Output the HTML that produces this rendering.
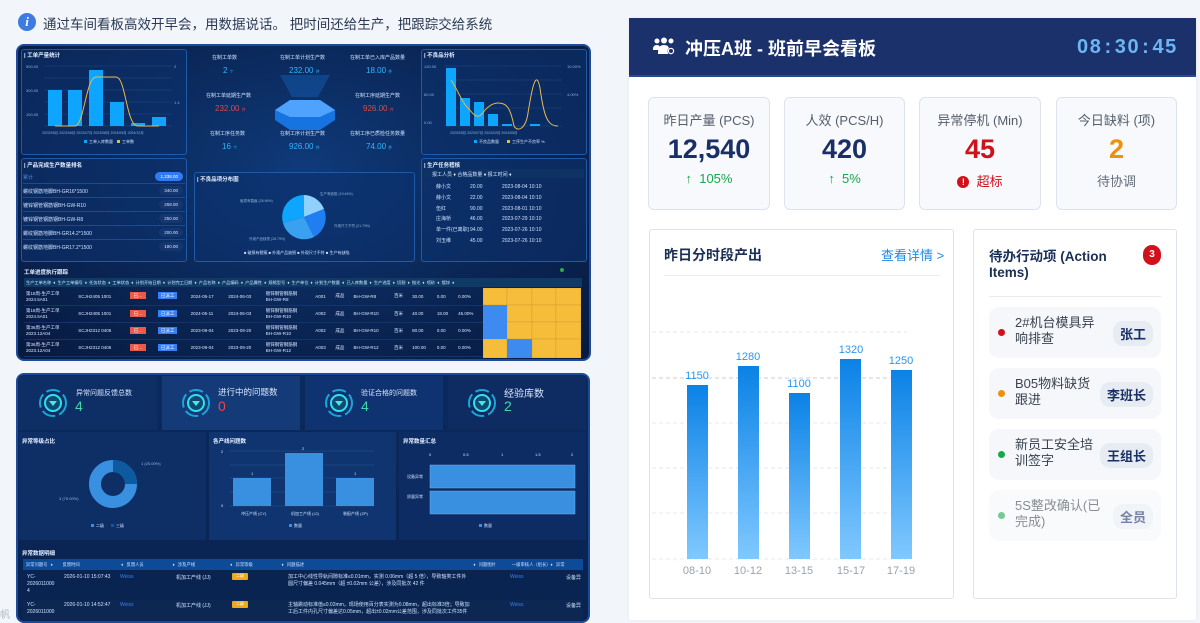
<!DOCTYPE html>
<html><head><meta charset="utf-8">
<style>
*{box-sizing:border-box;margin:0;padding:0}
body{width:1200px;height:620px;overflow:hidden;background:#f2f5f9;font-family:"Liberation Sans","Noto Sans CJK SC",sans-serif;position:relative}
.a{position:absolute}
.dk{background:radial-gradient(ellipse at 50% 40%,#0f3a7a 0%,#0a2656 55%,#071a40 100%);border:2px solid #1d4a9a;border-radius:8px;overflow:hidden}
.sp{background:rgba(12,50,110,.55);border:1px solid #1f5aa8;border-radius:3px}
.t6{font-size:5px;color:#cfe2ff;white-space:nowrap}
.st{font-size:5.5px;color:#e6f0ff;font-weight:bold;white-space:nowrap}
.card{background:#f7f9fc;border:1px solid #dde3ec;border-radius:6px;text-align:center}
.lab{font-size:13px;color:#555e6c;margin-top:12px}
.num{font-size:27px;font-weight:bold;color:#1a2f66;margin-top:5px}
.sub{font-size:13px;margin-top:6px}
.item{background:#f5f7fa;border-radius:10px;left:989px;width:172px;height:51px}
.item .d{position:absolute;left:9px;top:22px;width:7px;height:7px;border-radius:50%}
.item .tx{position:absolute;left:26px;top:8px;width:92px;font-size:13px;color:#3a4250;line-height:16px}
.item .tg{position:absolute;right:8px;top:14px;background:#e7ecf3;border-radius:10px;font-size:13px;font-weight:bold;color:#1a2f66;padding:3px 7px}
.row td{font-size:4.5px;color:#dde8ff;padding:0 2px;height:17px;border-bottom:1px solid #14346b}
</style></head><body>

<div class="a" style="left:18px;top:13px;width:18px;height:18px;border-radius:50%;background:#3d7be0;color:#fff;font:bold italic 13px 'Liberation Serif',serif;text-align:center;line-height:18px">i</div>
<div class="a" style="left:43px;top:13px;font-size:13.5px;color:#2b3a55">通过车间看板高效开早会，用数据说话。 把时间还给生产，把跟踪交给系统</div>

<div class="a dk" style="left:16px;top:44px;width:575px;height:317px"></div>
<div class="a sp" style="left:21px;top:49px;width:166px;height:106px"></div>
<div class="a st" style="left:24px;top:51px">| 工单产量统计</div>
<svg class="a" style="left:22px;top:58px" width="165" height="95">
 <g stroke="#1e4a85" stroke-width=".5"><line x1="22" y1="8" x2="150" y2="8"/><line x1="22" y1="20" x2="150" y2="20"/><line x1="22" y1="32" x2="150" y2="32"/><line x1="22" y1="44" x2="150" y2="44"/><line x1="22" y1="56" x2="150" y2="56"/><line x1="22" y1="68" x2="150" y2="68"/></g>
 <g fill="#0ea5ff"><rect x="26" y="32" width="14" height="36"/><rect x="46" y="32" width="14" height="36"/><rect x="67" y="12" width="14" height="56"/><rect x="88" y="44" width="14" height="24"/><rect x="109" y="65" width="14" height="3"/><rect x="130" y="59" width="14" height="9"/></g>
 <path d="M33 68 L53 68 C62 68 64 19 74 19 L94 19 C104 19 104 68 116 68 L137 68" stroke="#e8b84a" stroke-width="1" fill="none"/>
 <g fill="#8fb0da" font-size="4"><text x="4" y="10">500.00</text><text x="4" y="34">300.00</text><text x="4" y="58">100.00</text><text x="152" y="10">2</text><text x="152" y="46">1.4</text></g>
 <text x="20" y="76" font-size="3.5" fill="#8fb0da">2023/05月 2023/06月 2023/07月 2023/08月 2024/05月 2024/12月</text>
 <rect x="62" y="82" width="3" height="3" fill="#0ea5ff"/><text x="67" y="85" font-size="4" fill="#cfe2ff">工单入库数量</text><rect x="95" y="82" width="3" height="3" fill="#e8b84a"/><text x="100" y="85" font-size="4" fill="#cfe2ff">工单数</text>
</svg>

<svg class="a" style="left:260px;top:75px" width="90" height="70">
 <polygon points="20,0 70,0 58,22 32,22" fill="#1a6fd0" opacity=".35"/>
 <polygon points="15,35 30,25 60,25 75,35 75,45 60,55 30,55 15,45" fill="#1673e0"/>
 <polygon points="15,35 30,25 60,25 75,35 60,42 30,42" fill="#4fa3ff"/>
</svg>
<div class="a t6" style="left:212px;top:54px">在制工单数</div><div class="a" style="left:223px;top:66px;font-size:8px;color:#2fb6ff">2 <span style="font-size:4px">个</span></div>
<div class="a t6" style="left:280px;top:54px">在制工单计划生产数</div><div class="a" style="left:289px;top:66px;font-size:8px;color:#2fb6ff">232.00 <span style="font-size:4px">件</span></div>
<div class="a t6" style="left:350px;top:54px">在制工单已入库产品数量</div><div class="a" style="left:366px;top:66px;font-size:8px;color:#2fb6ff">18.00 <span style="font-size:4px">件</span></div>
<div class="a t6" style="left:206px;top:92px">在制工单延期生产数</div><div class="a" style="left:215px;top:104px;font-size:8px;color:#e04848">232.00 <span style="font-size:4px">件</span></div>
<div class="a t6" style="left:355px;top:92px">在制工序延期生产数</div><div class="a" style="left:363px;top:104px;font-size:8px;color:#e04848">926.00 <span style="font-size:4px">件</span></div>
<div class="a t6" style="left:210px;top:130px">在制工序任务数</div><div class="a" style="left:222px;top:142px;font-size:8px;color:#2fb6ff">16 <span style="font-size:4px">个</span></div>
<div class="a t6" style="left:280px;top:130px">在制工序计划生产数</div><div class="a" style="left:289px;top:142px;font-size:8px;color:#2fb6ff">926.00 <span style="font-size:4px">件</span></div>
<div class="a t6" style="left:350px;top:130px">在制工序已质检任务数量</div><div class="a" style="left:366px;top:142px;font-size:8px;color:#2fb6ff">74.00 <span style="font-size:4px">件</span></div>

<div class="a sp" style="left:421px;top:49px;width:166px;height:106px"></div>
<div class="a st" style="left:424px;top:51px">| 不良品分析</div>
<svg class="a" style="left:422px;top:58px" width="165" height="95">
 <g stroke="#1e4a85" stroke-width=".5"><line x1="22" y1="8" x2="140" y2="8"/><line x1="22" y1="22" x2="140" y2="22"/><line x1="22" y1="36" x2="140" y2="36"/><line x1="22" y1="50" x2="140" y2="50"/><line x1="22" y1="68" x2="140" y2="68"/></g>
 <g fill="#0ea5ff"><rect x="24" y="10" width="10" height="58"/><rect x="38" y="40" width="10" height="28"/><rect x="52" y="44" width="10" height="24"/><rect x="66" y="56" width="10" height="12"/><rect x="80" y="66" width="10" height="2"/><rect x="108" y="66" width="10" height="2"/></g>
 <path d="M29 22 C35 30 40 45 46 50 C50 54 54 62 60 56 C64 50 70 45 76 45 C84 45 88 48 92 68 C96 75 104 70 106 55 C110 30 114 10 118 30 C122 60 126 68 136 68" stroke="#e8b84a" stroke-width="1" fill="none"/>
 <g fill="#8fb0da" font-size="4"><text x="2" y="10">120.00</text><text x="2" y="38">60.00</text><text x="2" y="66">0.00</text><text x="145" y="10">10.00%</text><text x="145" y="38">4.00%</text></g>
 <text x="28" y="76" font-size="3.5" fill="#8fb0da">2023/05月   2023/07月   2024/02月   2024/05月</text>
 <rect x="52" y="82" width="3" height="3" fill="#0ea5ff"/><text x="57" y="85" font-size="4" fill="#cfe2ff">不良品数量</text><rect x="85" y="82" width="3" height="3" fill="#e8b84a"/><text x="90" y="85" font-size="4" fill="#cfe2ff">工序生产不良率 %</text>
</svg>

<div class="a sp" style="left:21px;top:158px;width:166px;height:104px"></div>
<div class="a st" style="left:24px;top:161px">| 产品完成生产数量排名</div>
<div class="a" style="left:23px;top:170px;width:162px">
 <div style="height:14px;border-bottom:1px solid #1c4a8a;position:relative"><span class="t6" style="position:absolute;left:0;top:4px;color:#5a8fe0">累计</span><span style="position:absolute;right:2px;top:2px;background:#2f7bf0;border-radius:6px;font-size:4.5px;color:#fff;padding:2px 5px">1,338.00</span></div>
 <div style="height:14px;border-bottom:1px solid #1c4a8a;position:relative"><span class="t6" style="position:absolute;left:0;top:4px">螺纹钢筋地脚BH-GR16*1500</span><span style="position:absolute;right:2px;top:2px;background:#15366e;border-radius:6px;font-size:4.5px;color:#cfe2ff;padding:2px 5px">340.00</span></div>
 <div style="height:14px;border-bottom:1px solid #1c4a8a;position:relative"><span class="t6" style="position:absolute;left:0;top:4px">镀锌钢管钢筋钢BH-GW-R10</span><span style="position:absolute;right:2px;top:2px;background:#15366e;border-radius:6px;font-size:4.5px;color:#cfe2ff;padding:2px 5px">268.00</span></div>
 <div style="height:14px;border-bottom:1px solid #1c4a8a;position:relative"><span class="t6" style="position:absolute;left:0;top:4px">镀锌钢管钢筋钢BH-GW-R8</span><span style="position:absolute;right:2px;top:2px;background:#15366e;border-radius:6px;font-size:4.5px;color:#cfe2ff;padding:2px 5px">250.00</span></div>
 <div style="height:14px;border-bottom:1px solid #1c4a8a;position:relative"><span class="t6" style="position:absolute;left:0;top:4px">螺纹钢筋地脚BH-GR14.2*1500</span><span style="position:absolute;right:2px;top:2px;background:#15366e;border-radius:6px;font-size:4.5px;color:#cfe2ff;padding:2px 5px">200.00</span></div>
 <div style="height:14px;position:relative"><span class="t6" style="position:absolute;left:0;top:4px">螺纹钢筋地脚BH-GR17.2*1500</span><span style="position:absolute;right:2px;top:2px;background:#15366e;border-radius:6px;font-size:4.5px;color:#cfe2ff;padding:2px 5px">180.00</span></div>
</div>

<div class="a sp" style="left:194px;top:172px;width:221px;height:90px"></div>
<div class="a st" style="left:197px;top:175px">| 不良品项分布图</div>
<svg class="a" style="left:194px;top:180px" width="221" height="82">
 <g transform="translate(110,37)">
  <path d="M0 0 L0 -22 A22 22 0 0 1 20 -8 Z" fill="#8fd0ff"/>
  <path d="M0 0 L20 -8 A22 22 0 0 1 10 20 Z" fill="#1f7ef0"/>
  <path d="M0 0 L10 20 A22 22 0 0 1 -21 6 Z" fill="#3aa0f0"/>
  <path d="M0 0 L-21 6 A22 22 0 0 1 0 -22 Z" fill="#0ea5ff"/>
 </g>
 <g font-size="3.5" fill="#8fb0da"><text x="126" y="15">生产有缺陷 (19.46%)</text><text x="46" y="22">破损有裂痕 (28.96%)</text><text x="140" y="47">外观尺寸不符 (21.79%)</text><text x="55" y="60">外观产品缺损 (28.79%)</text></g>
 <text x="50" y="74" font-size="4" fill="#cfe2ff">■ 破损有裂痕  ■ 外观产品缺损  ■ 外观尺寸不符  ■ 生产有缺陷</text>
</svg>

<div class="a sp" style="left:421px;top:158px;width:166px;height:104px"></div>
<div class="a st" style="left:424px;top:161px">| 生产任务稽核</div>
<div class="a" style="left:424px;top:169px;width:160px;height:9px;background:#0e3264"></div>
<div class="a t6" style="left:432px;top:171px">报工人员 ♦  合格品数量 ♦     报工时间 ♦</div>
<div class="a t6" style="left:436px;top:182px;line-height:10.8px">薛小文<br>薛小文<br>伍红<br>庄海桥<br>单一件(已离职)<br>刘玉维</div>
<div class="a t6" style="left:470px;top:182px;line-height:10.8px">20.00<br>22.00<br>90.00<br>46.00<br>94.00<br>45.00</div>
<div class="a t6" style="left:502px;top:182px;line-height:10.8px">2023-08-04 10:10<br>2023-08-04 10:10<br>2023-08-01 10:10<br>2023-07-29 10:10<br>2023-07-26 10:10<br>2023-07-26 10:10</div>

<div class="a st" style="left:24px;top:268px">工单进度执行跟踪</div>
<div class="a" style="left:560px;top:268px;width:4px;height:4px;border-radius:50%;background:#2ea84a"></div>
<div class="a" style="left:24px;top:278px;width:558px;height:9px;background:#0f3a66"></div>
<div class="a t6" style="left:26px;top:280px;font-size:4.2px;word-spacing:1px">生产工单名称 ♦ 生产工单编号 ♦ 任务状态 ♦ 工单状态 ♦ 计划开始日期 ♦ 计划完工日期 ♦ 产品名称 ♦ 产品编码 ♦ 产品属性 ♦ 规格型号 ♦ 生产单位 ♦ 计划生产数量 ♦ 已入库数量 ♦ 生产进度 ♦ 切割 ♦ 抛光 ♦ 喷砂 ♦ 镀锌 ♦</div>
<table class="a" style="left:24px;top:288px;width:459px;border-collapse:collapse">
 <tr class="row"><td>第18周-生产工单<br>2024.5A01</td><td>SCJH2405 1001</td><td><span style="background:#e85a4a;padding:1px 4px;color:#fff">已...</span></td><td><span style="background:#3a7ff0;padding:1px 3px;color:#fff">已派工</span></td><td>2024-05-17</td><td>2024-06-03</td><td>镀锌钢管钢筋钢<br>BH-GW-R8</td><td>A001</td><td>成品</td><td>BH-GW-R8</td><td>百米</td><td>30.00</td><td>0.00</td><td>0.00%</td></tr>
 <tr class="row"><td>第18周-生产工单<br>2024.5A01</td><td>SCJH2405 1001</td><td><span style="background:#e85a4a;padding:1px 4px;color:#fff">已...</span></td><td><span style="background:#3a7ff0;padding:1px 3px;color:#fff">已派工</span></td><td>2024-05-11</td><td>2024-06-03</td><td>镀锌钢管钢筋钢<br>BH-GW-R10</td><td>A002</td><td>成品</td><td>BH-GW-R10</td><td>百米</td><td>40.00</td><td>18.00</td><td>45.00%</td></tr>
 <tr class="row"><td>第36周-生产工单<br>2023.12A04</td><td>SCJH2312 0406</td><td><span style="background:#e85a4a;padding:1px 4px;color:#fff">已...</span></td><td><span style="background:#3a7ff0;padding:1px 3px;color:#fff">已派工</span></td><td>2023-09-04</td><td>2023-09-20</td><td>镀锌钢管钢筋钢<br>BH-GW-R10</td><td>A002</td><td>成品</td><td>BH-GW-R10</td><td>百米</td><td>80.00</td><td>0.00</td><td>0.00%</td></tr>
 <tr class="row"><td>第36周-生产工单<br>2023.12A04</td><td>SCJH2312 0406</td><td><span style="background:#e85a4a;padding:1px 4px;color:#fff">已...</span></td><td><span style="background:#3a7ff0;padding:1px 3px;color:#fff">已派工</span></td><td>2023-09-04</td><td>2023-09-20</td><td>镀锌钢管钢筋钢<br>BH-GW-R12</td><td>A003</td><td>成品</td><td>BH-GW-R12</td><td>百米</td><td>100.00</td><td>0.00</td><td>0.00%</td></tr>
</table>
<svg class="a" style="left:483px;top:288px" width="98" height="70">
 <g fill="#f5bd3a" stroke="#c99a2a" stroke-width=".4">
  <rect x="0" y="0" width="24" height="17"/><rect x="24" y="0" width="25" height="17"/><rect x="49" y="0" width="24" height="17"/><rect x="73" y="0" width="25" height="17"/>
  <rect x="24" y="17" width="25" height="17"/><rect x="49" y="17" width="24" height="17"/><rect x="73" y="17" width="25" height="17"/>
  <rect x="24" y="34" width="25" height="17"/><rect x="49" y="34" width="24" height="17"/><rect x="73" y="34" width="25" height="17"/>
  <rect x="0" y="51" width="24" height="19"/><rect x="49" y="51" width="24" height="19"/><rect x="73" y="51" width="25" height="19"/>
 </g>
 <g fill="#3d8af0"><rect x="0" y="17" width="24" height="17"/><rect x="0" y="34" width="24" height="17"/><rect x="24" y="51" width="25" height="19"/></g>
</svg>

<div class="a dk" style="left:16px;top:373px;width:574px;height:250px;background:linear-gradient(180deg,#0b2a5c,#0a2350)"></div>
<div class="a" style="left:19px;top:376px;width:138px;height:54px;background:#0d2f66"></div>
<div class="a" style="left:162px;top:376px;width:138px;height:54px;background:#143a78"></div>
<div class="a" style="left:305px;top:376px;width:138px;height:54px;background:#0f3270"></div>
<div class="a" style="left:448px;top:376px;width:138px;height:54px;background:#0e2c62"></div>
<svg class="a" style="left:38px;top:388px" width="30" height="30"><circle cx="15" cy="15" r="13" fill="none" stroke="#1aa6d8" stroke-width="2" stroke-dasharray="14 4"/><circle cx="15" cy="15" r="8" fill="#0e4a78" stroke="#32e0e6" stroke-width="2"/><path d="M11 13 L19 13 L15 18 Z" fill="#4de8d8"/></svg>
<svg class="a" style="left:181px;top:388px" width="30" height="30"><circle cx="15" cy="15" r="13" fill="none" stroke="#1aa6d8" stroke-width="2" stroke-dasharray="14 4"/><circle cx="15" cy="15" r="8" fill="#0e4a78" stroke="#32e0e6" stroke-width="2"/><path d="M11 13 L19 13 L15 18 Z" fill="#4de8d8"/></svg>
<svg class="a" style="left:324px;top:388px" width="30" height="30"><circle cx="15" cy="15" r="13" fill="none" stroke="#1aa6d8" stroke-width="2" stroke-dasharray="14 4"/><circle cx="15" cy="15" r="8" fill="#0e4a78" stroke="#32e0e6" stroke-width="2"/><path d="M11 13 L19 13 L15 18 Z" fill="#4de8d8"/></svg>
<svg class="a" style="left:467px;top:388px" width="30" height="30"><circle cx="15" cy="15" r="13" fill="none" stroke="#1aa6d8" stroke-width="2" stroke-dasharray="14 4"/><circle cx="15" cy="15" r="8" fill="#0e4a78" stroke="#32e0e6" stroke-width="2"/><path d="M11 13 L19 13 L15 18 Z" fill="#4de8d8"/></svg>
<div class="a" style="left:76px;top:388px;font-size:7px;color:#d8e6ff">异常问题反馈总数</div><div class="a" style="left:75px;top:398px;font-size:14px;color:#3ed8a8">4</div>
<div class="a" style="left:218px;top:386px;font-size:8.5px;color:#d8e6ff">进行中的问题数</div><div class="a" style="left:218px;top:398px;font-size:14px;color:#e84848">0</div>
<div class="a" style="left:361px;top:388px;font-size:7px;color:#d8e6ff">验证合格的问题数</div><div class="a" style="left:361px;top:398px;font-size:14px;color:#3ed8a8">4</div>
<div class="a" style="left:504px;top:385px;font-size:10px;color:#d8e6ff">经验库数</div><div class="a" style="left:504px;top:398px;font-size:14px;color:#3ed8a8">2</div>

<div class="a" style="left:19px;top:432px;width:187px;height:108px;background:#0e2e66"></div>
<div class="a" style="left:209px;top:432px;width:187px;height:108px;background:#0f3470"></div>
<div class="a" style="left:399px;top:432px;width:187px;height:108px;background:#0d2c64"></div>
<div class="a st" style="left:22px;top:437px">异常等级占比</div>
<div class="a st" style="left:213px;top:437px">各产线问题数</div>
<div class="a st" style="left:403px;top:437px">异常数量汇总</div>
<svg class="a" style="left:19px;top:440px" width="187" height="100">
 <circle cx="94" cy="44" r="18" fill="none" stroke="#3a90e0" stroke-width="12"/>
 <path d="M94 20 A24 24 0 0 1 118 44 L106 44 A12 12 0 0 0 94 32 Z" fill="#0d5aa0"/>
 <text x="122" y="25" font-size="4" fill="#9ab8e0">1 (25.00%)</text><text x="40" y="60" font-size="4" fill="#9ab8e0">3 (75.00%)</text>
 <rect x="72" y="84" width="3" height="3" fill="#3a90e0"/><text x="77" y="87" font-size="4" fill="#cfe2ff">二级</text><rect x="92" y="84" width="3" height="3" fill="#0d5aa0"/><text x="97" y="87" font-size="4" fill="#cfe2ff">三级</text>
</svg>
<svg class="a" style="left:209px;top:440px" width="187" height="100">
 <g stroke="#2a5a96" stroke-width=".4"><line x1="20" y1="11" x2="165" y2="11"/><line x1="20" y1="25" x2="165" y2="25"/><line x1="20" y1="38" x2="165" y2="38"/><line x1="20" y1="52" x2="165" y2="52"/><line x1="20" y1="66" x2="165" y2="66"/></g>
 <g fill="#3a90e0"><rect x="24" y="38" width="38" height="28"/><rect x="76" y="13" width="38" height="53"/><rect x="127" y="38" width="38" height="28"/></g>
 <g font-size="4" fill="#cfe2ff"><text x="42" y="35">1</text><text x="93" y="10">2</text><text x="145" y="35">1</text><text x="32" y="75">冲压产线 (CY)</text><text x="82" y="75">机加工产线 (JJ)</text><text x="134" y="75">装配产线 (ZP)</text><text x="12" y="13">2</text><text x="12" y="67">0</text></g>
 <rect x="80" y="84" width="3" height="3" fill="#3a90e0"/><text x="85" y="87" font-size="4" fill="#cfe2ff">数量</text>
</svg>
<svg class="a" style="left:399px;top:440px" width="187" height="100">
 <g font-size="4" fill="#cfe2ff"><text x="30" y="16">0</text><text x="64" y="16">0.5</text><text x="102" y="16">1</text><text x="136" y="16">1.5</text><text x="172" y="16">2</text><text x="8" y="38">设备异常</text><text x="8" y="58">质量异常</text></g>
 <g fill="#3a90e0" stroke="#6ab0f0" stroke-width=".5"><rect x="31" y="25" width="145" height="23"/><rect x="31" y="51" width="145" height="23"/></g>
 <rect x="80" y="84" width="3" height="3" fill="#3a90e0"/><text x="85" y="87" font-size="4" fill="#cfe2ff">数量</text>
</svg>

<div class="a st" style="left:22px;top:549px">异常数据明细</div>
<div class="a" style="left:23px;top:559px;width:560px;height:11px;background:#0d4a98"></div>
<div class="a t6" style="left:26px;top:562px;font-size:4.3px;word-spacing:2px">异常问题号 ♦ &nbsp; 反馈时间 &nbsp; &nbsp; &nbsp; &nbsp; &nbsp; &nbsp; ♦ 反馈人员 &nbsp; &nbsp; &nbsp; &nbsp; ♦ 涉及产线 &nbsp; &nbsp; &nbsp; &nbsp; &nbsp; ♦ 异常等级 &nbsp; &nbsp; &nbsp; &nbsp; ♦ 问题描述 &nbsp; &nbsp; &nbsp; &nbsp; &nbsp; &nbsp; &nbsp; &nbsp; &nbsp; &nbsp; &nbsp; &nbsp; &nbsp; &nbsp; &nbsp; &nbsp; &nbsp; &nbsp; &nbsp; &nbsp; &nbsp; &nbsp; &nbsp; &nbsp; &nbsp; &nbsp; ♦ 问题图片 &nbsp; &nbsp; 一级审核人（组长）♦ 异常</div>
<div class="a" style="left:23px;top:600px;width:560px;height:20px;background:#0c2752"></div>
<div class="a t6" style="left:27px;top:574px;line-height:7px">YC-<br>2026011000<br>4</div>
<div class="a t6" style="left:64px;top:574px">2026-01-10 15:07:43</div>
<div class="a t6" style="left:120px;top:574px;color:#3a7ff0">Weiss</div>
<div class="a t6" style="left:176px;top:574px">机加工产线 (JJ)</div>
<div class="a" style="left:232px;top:573px;width:16px;height:7px;background:#f0a816;border-radius:1px;font-size:4px;color:#fff;text-align:center">二级</div>
<div class="a t6" style="left:288px;top:574px;line-height:7px">加工中心线性导轨间隙标准≤0.01mm，实测 0.06mm（超 5 倍），导致轴类工件外<br>圆尺寸偏差 0.045mm（超 ±0.02mm 公差），涉及同批次 42 件</div>
<div class="a t6" style="left:510px;top:574px;color:#3a7ff0">Weiss</div><div class="a t6" style="left:566px;top:574px">设备异</div>
<div class="a t6" style="left:27px;top:602px;line-height:7px">YC-<br>2026011000</div>
<div class="a t6" style="left:64px;top:602px">2026-01-10 14:52:47</div>
<div class="a t6" style="left:120px;top:602px;color:#3a7ff0">Weiss</div>
<div class="a t6" style="left:176px;top:602px">机加工产线 (JJ)</div>
<div class="a" style="left:232px;top:601px;width:16px;height:7px;background:#f0a816;border-radius:1px;font-size:4px;color:#fff;text-align:center">二级</div>
<div class="a t6" style="left:288px;top:602px;line-height:7px">主轴跳动标准值≤0.02mm，现场使用百分表实测为0.08mm，超出标准3倍；导致加<br>工后工件内孔尺寸偏差达0.05mm，超出±0.02mm公差范围，涉及同批次工件35件</div>
<div class="a t6" style="left:510px;top:602px;color:#3a7ff0">Weiss</div><div class="a t6" style="left:566px;top:602px">设备异</div>
<div class="a" style="left:0px;top:606px;font-size:10px;color:#b0b8c4">帆</div>

<!-- RIGHT BOARD -->
<div class="a" style="left:629px;top:18px;width:567px;height:602px;background:#fff;border-radius:2px;box-shadow:0 0 4px rgba(0,0,0,.05)"></div>
<div class="a" style="left:629px;top:18px;width:567px;height:59px;background:#1a316b;border-bottom:2px solid #2a4a90"></div>
<svg class="a" style="left:653px;top:37px" width="22" height="18" viewBox="0 0 22 18" fill="#fff">
 <circle cx="4" cy="4" r="2.5"/><circle cx="11" cy="3.5" r="3"/><circle cx="18" cy="4" r="2.5"/>
 <path d="M0 12 Q0 8 4 8 Q7 8 7 11 L7 13 L0 13Z"/><path d="M5 16 Q5 8 11 8 Q15 8 16 11 L15 17 L5 17Z"/>
 <circle cx="18" cy="14" r="3.5" fill="#1a316b"/><circle cx="18" cy="14" r="2.6" fill="none" stroke="#fff" stroke-width="1.2"/>
</svg>
<div class="a" style="left:685px;top:35px;font-size:18px;font-weight:bold;color:#fff">冲压A班 - 班前早会看板</div>
<div class="a" style="left:1077px;top:36px;font-size:20px;font-weight:bold;color:#6db6f2;letter-spacing:1.6px;font-family:'Liberation Sans',sans-serif">08<span style="margin:0 2px">:</span>30<span style="margin:0 2px">:</span>45</div>

<div class="a card" style="left:648px;top:97px;width:122px;height:113px"><div class="lab">昨日产量 (PCS)</div><div class="num">12,540</div><div class="sub" style="color:#18a84a">↑&nbsp; 105%</div></div>
<div class="a card" style="left:784px;top:97px;width:121px;height:113px"><div class="lab">人效 (PCS/H)</div><div class="num">420</div><div class="sub" style="color:#18a84a">↑&nbsp; 5%</div></div>
<div class="a card" style="left:919px;top:97px;width:122px;height:113px"><div class="lab">异常停机 (Min)</div><div class="num" style="color:#d0101a">45</div><div class="sub" style="color:#d0101a"><span style="display:inline-block;width:12px;height:12px;border-radius:50%;background:#d0101a;color:#fff;font-size:9px;line-height:12px;font-weight:bold;vertical-align:1px">!</span>&nbsp; 超标</div></div>
<div class="a card" style="left:1056px;top:97px;width:121px;height:113px"><div class="lab">今日缺料 (项)</div><div class="num" style="color:#f0900a">2</div><div class="sub" style="color:#666e7a">待协调</div></div>

<div class="a" style="left:649px;top:229px;width:305px;height:370px;border:1px solid #dde3ec;border-radius:3px;background:#fff"></div>
<div class="a" style="left:664px;top:245px;font-size:14px;font-weight:bold;color:#1a2f55">昨日分时段产出</div>
<div class="a" style="left:881px;top:245px;font-size:13px;color:#1e88e5">查看详情 &gt;</div>
<div class="a" style="left:664px;top:275px;width:276px;height:1px;background:#e8ecf2"></div>
<svg class="a" style="left:649px;top:300px" width="305" height="290">
 <defs><linearGradient id="g" x1="0" y1="0" x2="0" y2="1"><stop offset="0" stop-color="#0a82e6"/><stop offset="1" stop-color="#80c8ff"/></linearGradient></defs>
 <g stroke="#e4e8ee" stroke-dasharray="4 3" stroke-width="1"><line x1="3" y1="32" x2="258" y2="32"/><line x1="3" y1="123" x2="258" y2="123"/><line x1="3" y1="168" x2="258" y2="168"/><line x1="3" y1="213" x2="258" y2="213"/><line x1="3" y1="259" x2="258" y2="259"/></g>
 <line x1="3" y1="78" x2="258" y2="78" stroke="#c8ced8" stroke-dasharray="4 3"/>
 <g fill="url(#g)"><rect x="38" y="85" width="21" height="174"/><rect x="89" y="66" width="21" height="193"/><rect x="140" y="93" width="21" height="166"/><rect x="191" y="59" width="21" height="200"/><rect x="242" y="70" width="21" height="189"/></g>
 <g fill="#2a96ee" font-size="11" text-anchor="middle"><text x="48" y="79">1150</text><text x="99" y="60">1280</text><text x="150" y="87">1100</text><text x="202" y="53">1320</text><text x="252" y="64">1250</text></g>
 <g fill="#9aa2ae" font-size="11" text-anchor="middle"><text x="48" y="274">08-10</text><text x="99" y="274">10-12</text><text x="150" y="274">13-15</text><text x="202" y="274">15-17</text><text x="252" y="274">17-19</text></g>
</svg>

<div class="a" style="left:973px;top:229px;width:204px;height:370px;border:1px solid #dde3ec;border-radius:3px;background:#fff"></div>
<div class="a" style="left:989px;top:249px;width:130px;font-size:13.5px;font-weight:bold;color:#1a2f55;line-height:16px">待办行动项 (Action Items)</div>
<div class="a" style="left:1143px;top:245px;width:18px;height:20px;border-radius:9px;background:#d0101a;color:#fff;font-size:10px;font-weight:bold;text-align:center;line-height:20px">3</div>
<div class="a" style="left:989px;top:296px;width:172px;height:1px;background:#e8ecf2"></div>
<div class="a item" style="top:307px"><div class="d" style="background:#d0101a"></div><div class="tx">2#机台模具异响排查</div><div class="tg">张工</div></div>
<div class="a item" style="top:368px"><div class="d" style="background:#f0900a"></div><div class="tx" style="width:82px">B05物料缺货跟进</div><div class="tg">李班长</div></div>
<div class="a item" style="top:429px"><div class="d" style="background:#18a84a"></div><div class="tx" style="width:82px">新员工安全培训签字</div><div class="tg">王组长</div></div>
<div class="a item" style="top:490px;opacity:.6"><div class="d" style="background:#18a84a"></div><div class="tx">5S整改确认(已完成)</div><div class="tg">全员</div></div>
</body></html>
